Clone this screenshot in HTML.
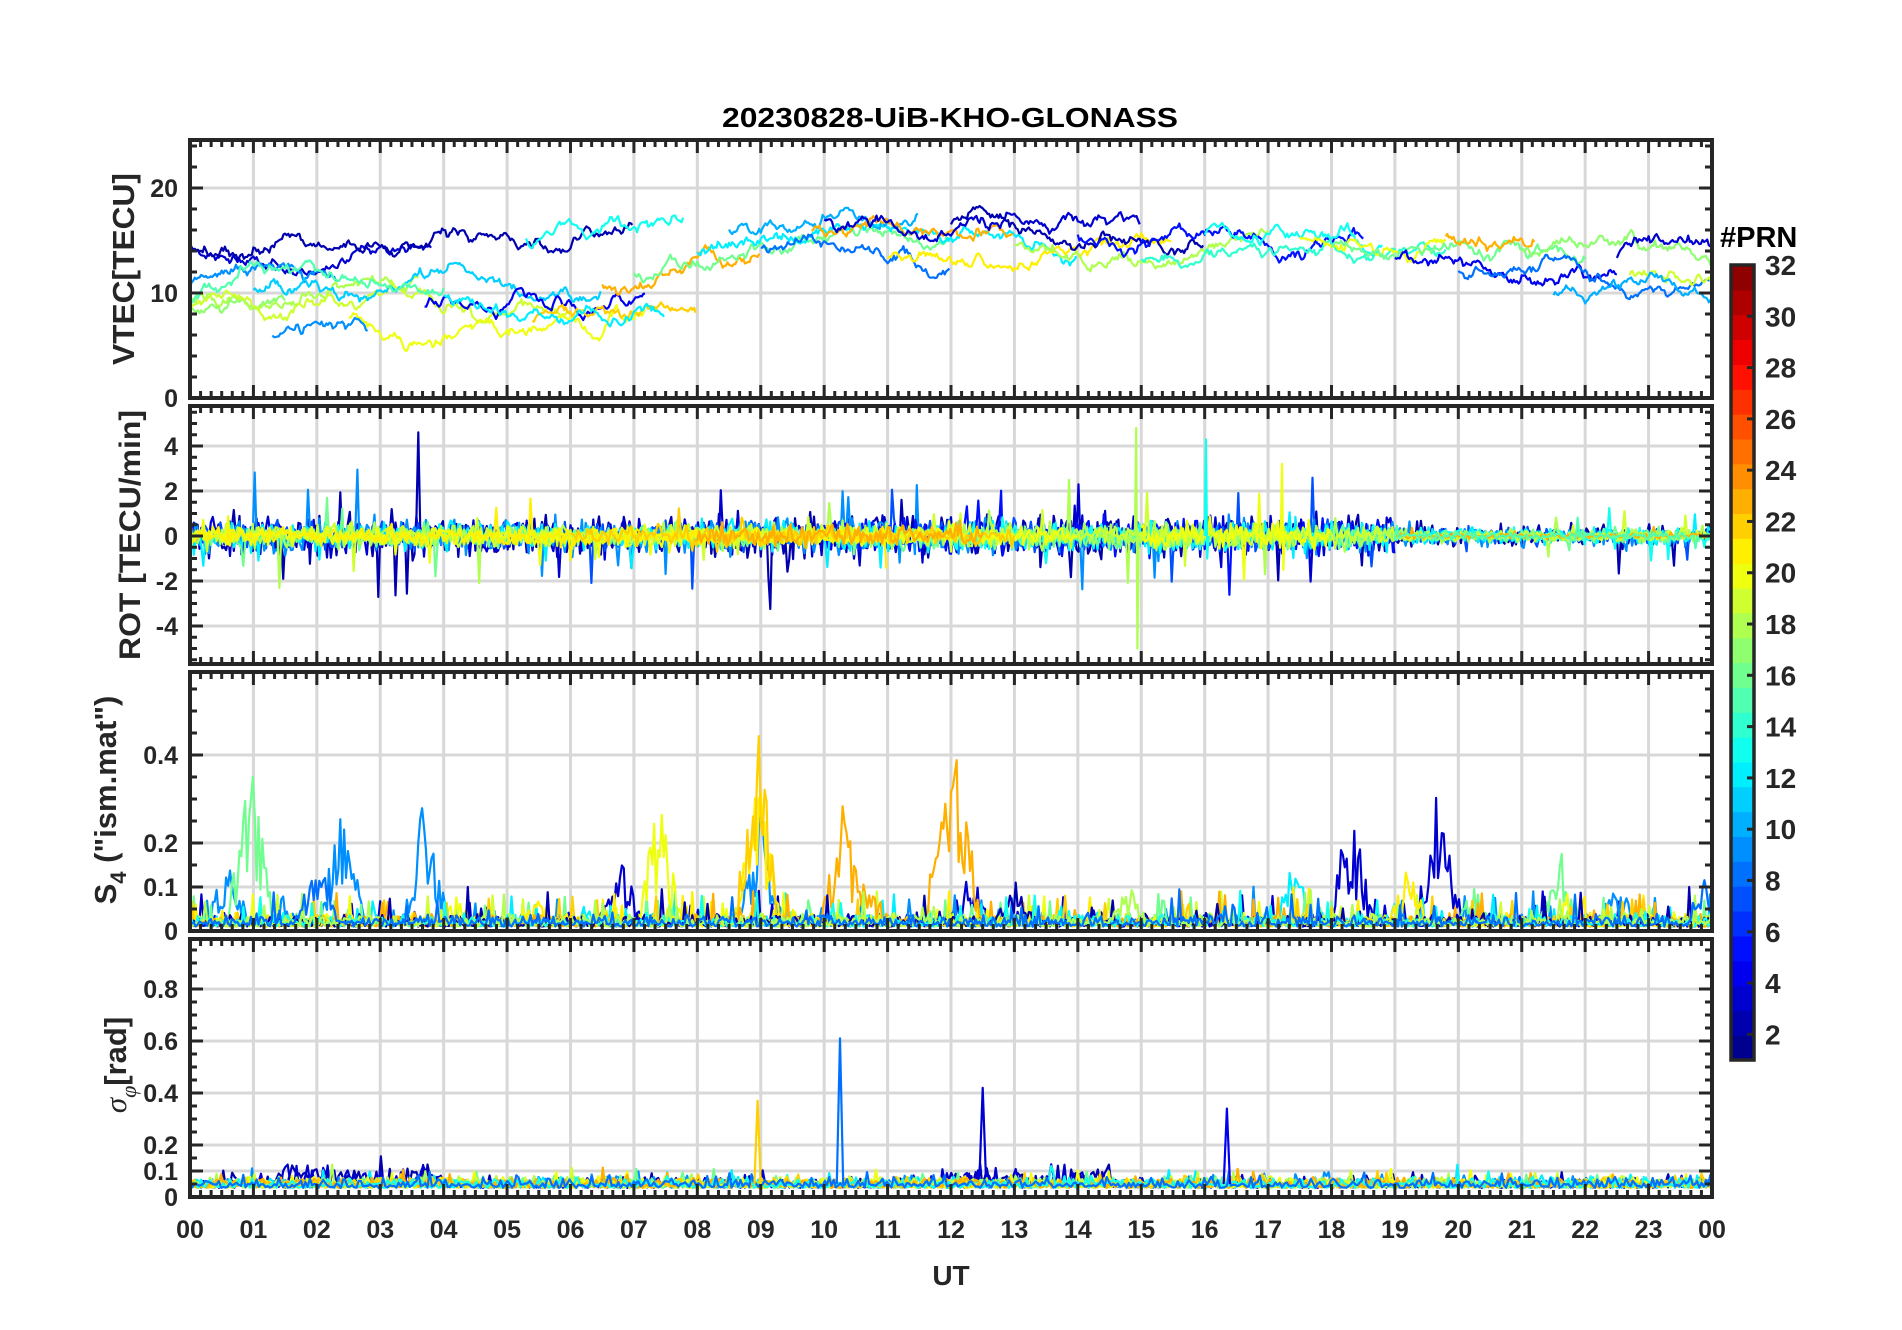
<!DOCTYPE html>
<html><head><meta charset="utf-8"><style>html,body{margin:0;padding:0;background:#fff}svg{display:block}text{font-family:"Liberation Sans",Arial,sans-serif;font-weight:bold;fill:#262626}</style></head>
<body>
<svg id="s" xmlns="http://www.w3.org/2000/svg" width="1902" height="1330" viewBox="0 0 1902 1330">
<rect width="1902" height="1330" fill="#fff"/>
<text x="950" y="127" font-size="28" text-anchor="middle" style="fill:#000" textLength="456" lengthAdjust="spacingAndGlyphs">20230828-UiB-KHO-GLONASS</text>
<g id="g"></g>
<text x="951" y="1285" font-size="28" text-anchor="middle">UT</text>
<text transform="translate(134,269) rotate(-90)" font-size="31" text-anchor="middle" textLength="192" lengthAdjust="spacingAndGlyphs">VTEC[TECU]</text>
<text transform="translate(140,535) rotate(-90)" font-size="30" text-anchor="middle" textLength="250" lengthAdjust="spacingAndGlyphs">ROT [TECU/min]</text>
<text transform="translate(116,800) rotate(-90)" font-size="31" text-anchor="middle">S<tspan font-size="22" dy="10">4</tspan><tspan dy="-10"> ("ism.mat")</tspan></text>
<text transform="translate(126,1065) rotate(-90)" font-size="31" text-anchor="middle"><tspan style="font-family:'Liberation Serif',serif;font-style:italic;font-weight:normal">σ</tspan><tspan dy="10" font-size="22" style="font-family:'Liberation Serif',serif;font-style:italic;font-weight:normal">φ</tspan><tspan dy="-10">[rad]</tspan></text>
<text x="1720" y="247" font-size="29" style="fill:#000">#PRN</text>
</svg>
<script>
(function(){
var G=document.getElementById("g");
var s=987654321;function R(){s^=s<<13;s^=s>>>17;s^=s<<5;return ((s>>>0)%1000000)/1000000;}
function gs(){return (R()+R()+R()-1.5)*1.15;}
var out=[];
function jet(v){function f(x){return Math.max(0,Math.min(1,x));}var r=f(1.5-Math.abs(4*v-3)),g=f(1.5-Math.abs(4*v-2)),b=f(1.5-Math.abs(4*v-1));return "rgb("+Math.round(r*255)+","+Math.round(g*255)+","+Math.round(b*255)+")";}
function pc(p){return jet((p-0.5)/32);}
var X0=190,X1=1712,HW=(X1-X0)/24;function X(t){return X0+t*HW;}
var P=[{t:140,b:398,y:function(v){return 398-v*10.5;},lo:0,hi:24.5},
{t:406,b:664,y:function(v){return 536-v*22.5;},lo:-5.6,hi:5.6},
{t:672,b:931,y:function(v){return 931-v*440;},lo:0,hi:0.58},
{t:939,b:1197,y:function(v){return 1197-v*260;},lo:0,hi:0.98}];
function clip(i){out.push('<clipPath id="c'+i+'"><rect x="'+X0+'" y="'+P[i].t+'" width="'+(X1-X0)+'" height="'+(P[i].b-P[i].t)+'"/></clipPath>');}
P.forEach(function(p,i){clip(i);for(var h=1;h<24;h++)out.push('<line x1="'+X(h)+'" x2="'+X(h)+'" y1="'+p.t+'" y2="'+p.b+'" stroke="#d8d8d8" stroke-width="3"/>');});
var GY=[[10,20],[-4,-2,0,2,4],[0.1,0.2,0.4],[0.1,0.2,0.4,0.6,0.8]];
GY.forEach(function(a,i){a.forEach(function(v){var y=P[i].y(v);out.push('<line x1="'+X0+'" x2="'+X1+'" y1="'+y+'" y2="'+y+'" stroke="#d8d8d8" stroke-width="3"/>');});});
function line(i,pts,p){var d="";for(var k=0;k<pts.length;k++){var v=Math.max(P[i].lo,Math.min(P[i].hi,pts[k][1]));d+=(k?"L":"M")+X(pts[k][0]).toFixed(1)+" "+P[i].y(v).toFixed(1);}out.push('<path clip-path="url(#c'+i+')" d="'+d+'" fill="none" stroke="'+pc(p)+'" stroke-width="2.2" stroke-linejoin="round"/>');}
function base(t){if(t<6)return 11.5;if(t<9)return 11.5+(t-6)*1.2;if(t<18)return 15.5;return 14.5-(t-18)*0.3;}
var segs=[[0,3.8,3,2],[0,7,2,3],[0,2.3,9,0],[0,1.5,17,-3],[0,3.6,18,-1.5],[0,6,19,-2],[1,6.5,11,-2],[2.5,7.2,20,-5],[3.7,7.2,4,-3],[5.3,7.8,13,5],[5.4,8,22,-4],[6.5,9,23,-1],[7,12,16,0],[8,14,12,0],[8.5,11.5,10,1],[9,12,8,-2],[9.8,13,23,1],[10,15,3,1],[11,15.5,21,-1],[12,16,2,0],[13,17,18,-1],[14,18.5,5,0],[15,19.8,14,-1],[16,18.8,13,0],[17.5,19.8,20,0],[18,22,16,1],[19,22.5,4,-1],[19.8,21.2,23,1],[20,24,8,-2],[21,24,17,0],[22.5,24,3,0],[22.7,24,19,-1],[21.5,24,10,-3],[0,4,15,-1],[1.3,2.8,9,-5],[4,7.5,12,-3]];
segs.forEach(function(g){var off=g[3],v=base(g[0])+off+gs(),pts=[];for(var t=g[0];t<=g[1];t+=0.025){v+=gs()*0.4+(base(t)+off-v)*0.03;pts.push([t,v]);}line(0,pts,g[2]);});
var rs=[[0,24,2,0.9],[0,19,3,0.8],[0,24,7,0.6],[0,24,9,0.7],[10,19,5,0.7],[0,24,12,0.6],[12,24,13,0.6],[0,24,16,0.5],[0,24,18,0.5],[0,24,19,0.45],[0,14,20,0.4],[0,11,21,0.35],[6,13,22,0.4],[8,12.5,23,0.45],[15,18,20,0.6],[19,24,23,0.2],[19,24,15,0.3]];
rs.forEach(function(g){var pts=[];for(var t=g[0];t<=g[1];t+=0.03){var a=1.6*g[3]*(t>19?0.55:1);var v=gs()*a*0.55;if(R()<0.035)v=gs()*a*2.2;pts.push([t,v]);}line(1,pts,g[2]);});
line(1,[[14.9,0],[14.92,4.8],[14.94,-5],[14.96,0]],18);
line(1,[[16,0],[16.02,4.3],[16.04,-1],[16.06,0]],13);
line(1,[[17.2,0],[17.22,3.2],[17.24,-1.5],[17.26,0]],20);
var bursts=[[0.95,0.4,16],[0.6,0.18,9],[2.4,0.3,9],[2.0,0.2,8],[3.7,0.33,9],[3.4,0.15,10],[5.3,0.1,10],[5.5,0.08,21],[7.4,0.32,20],[6.8,0.17,3],[8.95,0.47,22],[8.95,0.4,21],[9.0,0.3,9],[10.3,0.3,23],[10.6,0.16,23],[11.9,0.35,23],[12.1,0.48,23],[12.3,0.15,3],[13.0,0.12,2],[13.6,0.2,17],[14.5,0.27,17],[14.8,0.12,18],[15.4,0.27,4],[16.9,0.42,15],[17.0,0.38,4],[17.4,0.16,12],[18.3,0.3,3],[18.7,0.22,5],[19.7,0.35,3],[19.2,0.15,21],[20.3,0.12,16],[21.6,0.2,16],[22.2,0.3,17],[22.5,0.12,9],[23.2,0.4,17],[23.9,0.15,8],[1.5,0.06,9],[4.2,0.08,20],[6.2,0.06,12]];
var s4p=[3,9,12,16,19,20,21,22,23,2,13,18,8];
s4p.forEach(function(p){var pts=[];for(var t=0;t<=24;t+=0.03){var v=0.01+Math.abs(gs())*0.02;if(R()<0.05)v+=R()*0.07;bursts.forEach(function(b){if(b[2]==p&&Math.abs(t-b[0])<0.4){var w=1-Math.abs(t-b[0])/0.4;v=Math.max(v,b[1]*w*(0.3+R()*0.7));}});pts.push([t,v]);}line(2,pts,p);});
var sp=[2,3,9,12,16,18,19,20,22,23,13,8];
sp.forEach(function(p){var pts=[];var hi=(p==2||p==3);for(var t=0;t<=24;t+=0.035){var a=0.05;if(hi&&((t>1&&t<4)||(t>12&&t<14.5)))a=0.11;var v=0.035+Math.abs(gs())*a*0.6;if(R()<0.04)v+=R()*a;pts.push([t,v]);}line(3,pts,p);});
line(3,[[10.2,0.05],[10.25,0.61],[10.3,0.05]],8);
line(3,[[8.9,0.05],[8.95,0.37],[9.0,0.05]],22);
line(3,[[12.45,0.08],[12.5,0.42],[12.55,0.08]],3);
line(3,[[16.3,0.05],[16.35,0.34],[16.4,0.05]],4);
var ST="#262626";
P.forEach(function(p,i){
for(var m=0;m<=144;m++){var x=X(m/6),L=(m%6==0)?13:7;out.push('<line x1="'+x+'" x2="'+x+'" y1="'+p.t+'" y2="'+(p.t+L)+'" stroke="'+ST+'" stroke-width="3"/><line x1="'+x+'" x2="'+x+'" y1="'+p.b+'" y2="'+(p.b-L)+'" stroke="'+ST+'" stroke-width="3"/>');}
out.push('<rect x="'+X0+'" y="'+p.t+'" width="'+(X1-X0)+'" height="'+(p.b-p.t)+'" fill="none" stroke="'+ST+'" stroke-width="4"/>');});
function yt(i,maj,minStep,lo,hi,labels){for(var v=lo;v<=hi+1e-9;v+=minStep){var y=P[i].y(v);if(y<P[i].t+2||y>P[i].b-2)continue;var isM=maj.some(function(q){return Math.abs(q-v)<1e-6;});var L=isM?13:7;out.push('<line x1="'+X0+'" x2="'+(X0+L)+'" y1="'+y+'" y2="'+y+'" stroke="'+ST+'" stroke-width="3"/><line x1="'+X1+'" x2="'+(X1-L)+'" y1="'+y+'" y2="'+y+'" stroke="'+ST+'" stroke-width="3"/>');}
labels.forEach(function(l){out.push('<text x="178" y="'+(P[i].y(l[0])+9)+'" font-size="25" text-anchor="end">'+l[1]+'</text>');});}
yt(0,[0,10,20],2,0,24,[[0,"0"],[10,"10"],[20,"20"]]);
yt(1,[-4,-2,0,2,4],0.5,-5.5,5.5,[[-4,"-4"],[-2,"-2"],[0,"0"],[2,"2"],[4,"4"]]);
yt(2,[0,0.1,0.2,0.4],0.05,0,0.58,[[0,"0"],[0.1,"0.1"],[0.2,"0.2"],[0.4,"0.4"]]);
yt(3,[0,0.1,0.2,0.4,0.6,0.8],0.05,0,0.98,[[0,"0"],[0.1,"0.1"],[0.2,"0.2"],[0.4,"0.4"],[0.6,"0.6"],[0.8,"0.8"]]);
for(var h=0;h<=24;h++){var l=(h%24<10?"0":"")+(h%24);out.push('<text x="'+X(h)+'" y="1238" font-size="25" text-anchor="middle">'+l+'</text>');}
var CT=265,CB=1060,CX=1731,CW=23,bh=(CB-CT)/32;
for(var k=0;k<32;k++){out.push('<rect x="'+CX+'" y="'+(CB-(k+1)*bh).toFixed(2)+'" width="'+CW+'" height="'+(bh+0.6).toFixed(2)+'" fill="'+jet((k+0.5)/32)+'"/>');}
for(var v=2;v<=32;v+=2){var y=CB-(v-1)/31*(CB-CT);if(v<32)out.push('<line x1="'+(CX+CW-7)+'" x2="'+(CX+CW)+'" y1="'+y+'" y2="'+y+'" stroke="'+ST+'" stroke-width="3"/>');out.push('<text x="1765" y="'+(y+10)+'" font-size="28">'+v+'</text>');}
out.push('<rect x="'+CX+'" y="'+CT+'" width="'+CW+'" height="'+(CB-CT)+'" fill="none" stroke="'+ST+'" stroke-width="3.5"/>');
G.innerHTML=out.join("");
})();
</script>
</body></html>
